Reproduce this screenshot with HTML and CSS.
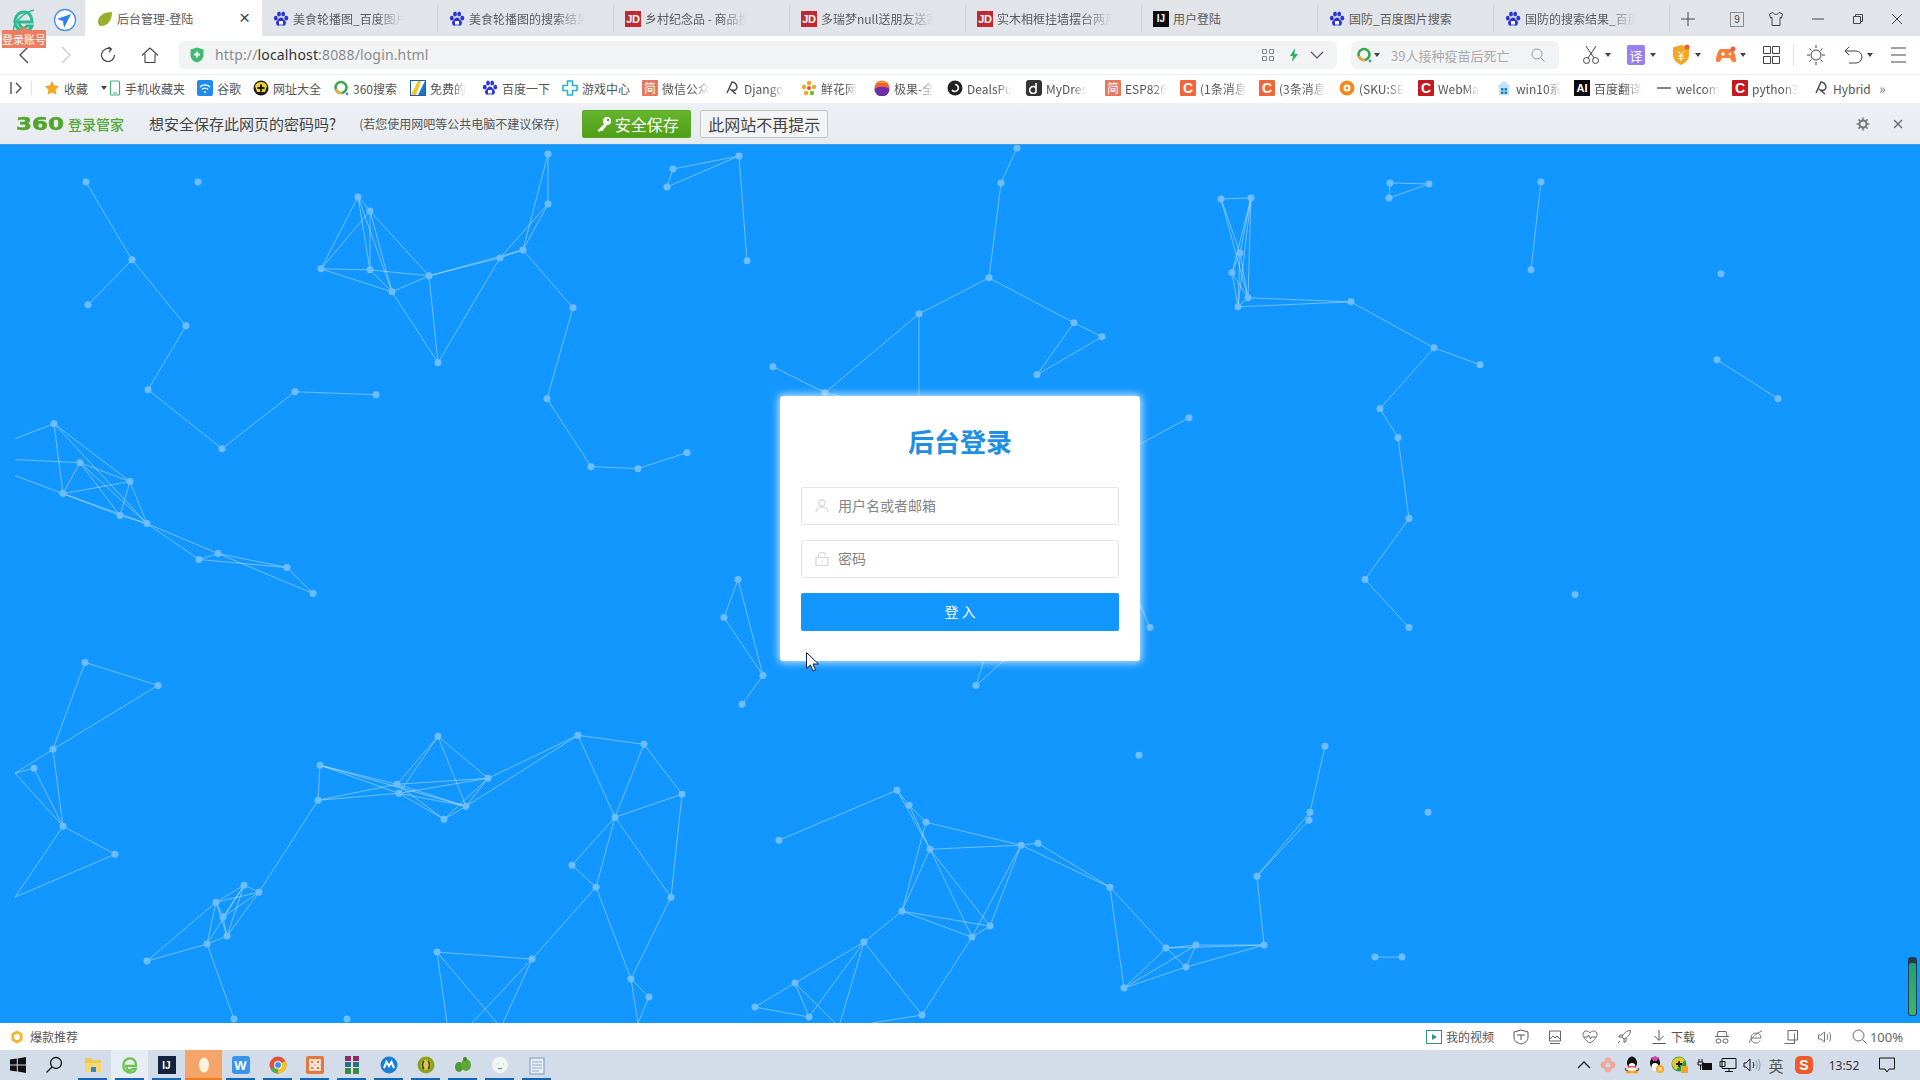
FILE: index.html
```html
<!DOCTYPE html>
<html lang="zh">
<head>
<meta charset="utf-8">
<title>后台管理-登陆</title>
<link rel="stylesheet" href="styles.css">
</head>
<body>
<svg class="defs" width="0" height="0">
  <symbol id="paw" viewBox="0 0 16 16"><g fill="#2b35d8"><ellipse cx="2.8" cy="7.2" rx="1.9" ry="2.4"/><ellipse cx="6" cy="3" rx="1.9" ry="2.5"/><ellipse cx="10.2" cy="3" rx="1.9" ry="2.5"/><ellipse cx="13.3" cy="7.2" rx="1.9" ry="2.4"/><path d="M8 6.5c-2 0-2.5 2-4 3.2-1.500 1.300-1.200 5 1.500 5 1 0 1.500-.4 2.500-.4s1.500.4 2.500.4c2.700 0 3-3.700 1.500-5-1.500-1.200-2-3.200-4-3.200z"/></g><rect x="6" y="10" width="4" height="3.500" fill="#fff"/></symbol>
  <symbol id="leaf" viewBox="0 0 16 16"><path d="M15 1C8 1 1 4 1 11c0 2 1 4 3 4 7 0 11-6 11-14z" fill="#9aae2e"/></symbol>
  <symbol id="q360" viewBox="0 0 16 16"><circle cx="8" cy="7.500" r="5.500" fill="none" stroke="#38a84a" stroke-width="2.600"/><path d="M3 9a5.500 5.500 0 0 0 6 4" fill="none" stroke="#f2a33a" stroke-width="2.600"/><circle cx="14" cy="14" r="1.400" fill="#4a90d9"/></symbol>
  <symbol id="dj" viewBox="0 0 16 16"><path d="M3 13 8 2c2 0 5 2 5 5s-3 4-5 3M6 9l6 5" fill="none" stroke="#444" stroke-width="1.400"/></symbol>
</svg>

<header class="tabbar">
  <div class="brand">
    <svg class="ie" width="24" height="26" viewBox="0 0 24 26"><path d="M5 14h15c0-6-3-10-8-10S3 8 3 14c0 5 4 9 9 9 4 0 7-2 8-5h-5c-1 1-2 2-3 2-3 0-5-3-5-6" fill="none" stroke="#2dbb8e" stroke-width="3"/><path d="M2 22C0 18 8 6 22 2" fill="none" stroke="#2dbb8e" stroke-width="1.500"/></svg>
    <svg class="navi" width="24" height="24" viewBox="0 0 24 24"><circle cx="12" cy="12" r="10.500" fill="#fff" stroke="#4a90e2" stroke-width="1.300"/><path d="M18 6 11 20l-1-7-6-2z" fill="#2f80ed"/></svg>
    <span class="badge">登录账号</span>
  </div>
  <div class="tab tab-active"><svg class="fav" width="16" height="16"><use href="#leaf"/></svg><span class="tab-title">后台管理-登陆</span><span class="tab-x">×</span></div>
  <div class="tab"><svg class="fav" width="16" height="16"><use href="#paw"/></svg><span class="tab-title fade">美食轮播图_百度图片</span></div>
  <div class="tab"><svg class="fav" width="16" height="16"><use href="#paw"/></svg><span class="tab-title fade">美食轮播图的搜索结果</span></div>
  <div class="tab"><span class="fav box jd">JD</span><span class="tab-title fade">乡村纪念品 - 商品搜</span></div>
  <div class="tab"><span class="fav box jd">JD</span><span class="tab-title fade">多瑞梦null送朋友送家</span></div>
  <div class="tab"><span class="fav box jd">JD</span><span class="tab-title fade">实木相框挂墙摆台两用</span></div>
  <div class="tab"><span class="fav box ij">IJ</span><span class="tab-title">用户登陆</span></div>
  <div class="tab"><svg class="fav" width="16" height="16"><use href="#paw"/></svg><span class="tab-title">国防_百度图片搜索</span></div>
  <div class="tab"><svg class="fav" width="16" height="16"><use href="#paw"/></svg><span class="tab-title fade">国防的搜索结果_百度</span></div>
  <div class="winctl">
    <svg class="wc" width="16" height="16" viewBox="0 0 16 16"><path d="M8 1v14M1 8h14" stroke="#444" fill="none"/></svg>
    <span class="wc wc-count"><span class="count">9</span></span>
    <svg class="wc wc-shirt" width="16" height="16" viewBox="0 0 16 16"><path d="M5 1.500 1.500 3l1 4 1.500-.5v8h8v-8l1.500.5 1-4L11 1.500C10 4 6 4 5 1.500z" stroke="#444" fill="none"/></svg>
    <svg class="wc wc-m" width="14" height="14" viewBox="0 0 14 14"><path d="M1 7h12" stroke="#444" fill="none"/></svg>
    <svg class="wc wc-r" width="12" height="12" viewBox="0 0 12 12"><path d="M1.500 3.500h7v7h-7zM3.500 3.500v-2h7v7h-2" stroke="#444" fill="none"/></svg>
    <svg class="wc wc-c" width="12" height="12" viewBox="0 0 12 12"><path d="M1 1l10 10M11 1 1 11" stroke="#444" fill="none"/></svg>
  </div>
</header>

<div class="addrbar">
  <span class="nav"><svg width="14" height="18" viewBox="0 0 14 18"><path d="M11 1 3 9l8 8" stroke="#444" fill="none" stroke-width="1.200"/></svg></span>
  <span class="nav"><svg width="14" height="18" viewBox="0 0 14 18"><path d="m3 1 8 8-8 8" stroke="#c8c8c8" fill="none" stroke-width="1.200"/></svg></span>
  <span class="nav"><svg width="18" height="18" viewBox="0 0 18 18"><path d="M15.500 9A6.500 6.500 0 1 1 12 3.200M9.500 1l3 2.200-2.500 2.800" stroke="#444" fill="none" stroke-width="1.200"/></svg></span>
  <span class="nav"><svg width="18" height="18" viewBox="0 0 18 18"><path d="M1 9.500 9 2l8 7.500M4 8v8.500h10V8" stroke="#444" fill="none" stroke-width="1.100"/></svg></span>
  <div class="url">
    <svg width="14" height="16" viewBox="0 0 14 16"><path d="M7 .5 13.500 2.500V8c0 4-3 6.500-6.500 7.500C3.500 14.500.5 12 .5 8V2.500z" fill="#3fbb74"/><path d="M7 4.500v6M4 7.500h6" stroke="#fff" stroke-width="1.800"/></svg>
    <span class="url-text">http://<b>localhost</b>:8088/login.html</span>
    <svg class="qr" width="12" height="12" viewBox="0 0 12 12"><path d="M.5.500h4v4h-4zM7.500.500h4v4h-4zM.5 7.500h4v4h-4zM7.500 7.500h4v4h-4z" stroke="#888" fill="none"/></svg>
    <svg class="bolt" width="10" height="14" viewBox="0 0 10 14"><path d="M6 0 1 8h3l-1 6 6-8H5.500z" fill="#26b36a"/></svg>
    <svg class="chev" width="14" height="8" viewBox="0 0 14 8"><path d="m1 1 6 6 6-6" stroke="#555" fill="none" stroke-width="1.200"/></svg>
  </div>
  <div class="search">
    <svg width="16" height="16"><use href="#q360"/></svg><i class="caret"></i>
    <span class="search-text">39人接种疫苗后死亡</span>
    <svg class="mag" width="14" height="14" viewBox="0 0 14 14"><circle cx="6" cy="6" r="5" stroke="#999" fill="none"/><path d="m10 10 3.500 3.500" stroke="#999"/></svg>
  </div>
  <div class="tools">
    <span class="tool"><svg width="20" height="20" viewBox="0 0 20 20"><path d="M5 1l8 12M15 1 7 13" stroke="#444" fill="none"/><circle cx="5.500" cy="15.500" r="3" stroke="#444" fill="none"/><circle cx="14.500" cy="15.500" r="3" stroke="#444" fill="none"/></svg><i class="caret"></i></span>
    <span class="tool"><span class="yi">译</span><i class="caret"></i></span>
    <span class="tool"><svg width="20" height="22" viewBox="0 0 20 22"><path d="M10 1l8 2.500V11c0 5-4 8-8 10-4-2-8-5-8-10V3.500z" fill="#f5a623"/><path d="m7 7 3 4 3-4M10 11v6M7 12h6M7 14.500h6" stroke="#fff" fill="none"/><circle cx="16" cy="3" r="2.500" fill="#ef5b4a"/></svg><i class="caret"></i></span>
    <span class="tool"><svg width="22" height="18" viewBox="0 0 22 18"><path d="M6 3h10c3 0 5 8 5 11s-3 3-5 0l-1-2H7l-1 2c-2 3-5 3-5 0S3 3 6 3z" fill="#f5823a"/><path d="M6 8h4M8 6v4" stroke="#fff" stroke-width="1.500"/><circle cx="15" cy="8" r="1.300" fill="#fff"/><circle cx="18" cy="3" r="2.500" fill="#ef5b4a"/></svg><i class="caret"></i></span>
    <svg class="tool-i" width="24" height="20" viewBox="0 0 24 20"><path d="M4.500 1.500h7v7h-7zM13.500 1.500h7v7h-7zM4.500 11.500h7v7h-7zM13.500 11.500h7v7h-7z" stroke="#444" fill="none"/></svg>
    <i class="tool-sep"></i>
    <svg class="tool-i" width="24" height="22" viewBox="0 0 24 22"><circle cx="12" cy="11" r="5" stroke="#444" fill="none"/><path d="M12 1v3M12 18v3M3 11h3M18 11h3M5.500 4.500l2 2M16.500 15.500l2 2M18.500 4.500l-2 2M7.500 15.500l-2 2" stroke="#444"/></svg>
    <span class="tool"><svg width="24" height="20" viewBox="0 0 24 20"><path d="M4 6h11a6 6 0 0 1 0 12H8M8 2 4 6l4 4" stroke="#444" fill="none"/></svg><i class="caret"></i></span>
    <svg class="tool-i" width="24" height="18" viewBox="0 0 24 18"><path d="M5 2h15M5 9h15M5 16h15" stroke="#444"/></svg>
  </div>
</div>

<nav class="bookmarks">
  <div class="bm bm-toggle"><svg width="16" height="16" viewBox="0 0 16 16"><path d="M3 2v12M8 3l5 5-5 5" stroke="#444" fill="none" stroke-width="1.300"/></svg><i class="bm-sep"></i></div>
  <div class="bm"><svg class="bi" width="16" height="16" viewBox="0 0 16 16"><path d="m8 1 2.200 4.600 5 .7-3.600 3.500.9 5L8 12.400l-4.500 2.400.9-5L.8 6.300l5-.7z" fill="#f5a623"/></svg><span class="bt">收藏</span><i class="caret bm-caret"></i></div>
  <div class="bm"><svg class="bi" width="12" height="16" viewBox="0 0 12 16"><rect x="1.500" y="1" width="9" height="14" rx="1" fill="#fff" stroke="#49b07b" stroke-width="1.200"/><path d="M4 13h4" stroke="#49b07b"/></svg><span class="bt bt-near">手机收藏夹</span></div>
  <div class="bm"><span class="bi box wifi"><svg width="12" height="12" viewBox="0 0 12 12"><path d="M1 5a7 7 0 0 1 10 0M3 7.500a4 4 0 0 1 6 0" stroke="#fff" fill="none" stroke-width="1.200"/><circle cx="6" cy="10" r="1" fill="#fff"/></svg></span><span class="bt">谷歌</span></div>
  <div class="bm"><svg class="bi" width="16" height="16" viewBox="0 0 16 16"><circle cx="8" cy="8" r="7.500" fill="#1c1c1c"/><path d="M2 6a6.500 6.500 0 0 1 12 0l-2 6H4z" fill="#f0d22e"/><path d="M8 4.500v7M4.500 8h7" stroke="#1c1c1c" stroke-width="2"/></svg><span class="bt">网址大全</span></div>
  <div class="bm"><svg class="bi" width="16" height="16"><use href="#q360"/></svg><span class="bt">360搜索</span></div>
  <div class="bm"><svg class="bi" width="16" height="16" viewBox="0 0 16 16"><rect x=".5" y=".5" width="15" height="15" fill="#fff" stroke="#1a5fa8"/><path d="M1 15 8 1h3L6 15z" fill="#f2c41c"/><path d="M15 1v14H8z" fill="#1a76c8"/></svg><span class="bt fade">免费的</span></div>
  <div class="bm"><svg class="bi" width="16" height="16"><use href="#paw"/></svg><span class="bt">百度一下</span></div>
  <div class="bm"><svg class="bi" width="16" height="16" viewBox="0 0 16 16"><path d="M5.500 1h5v4.500H15v5h-4.500V15h-5v-4.500H1v-5h4.500z" fill="none" stroke="#28b3c8" stroke-width="1.600"/></svg><span class="bt">游戏中心</span></div>
  <div class="bm"><span class="bi box jian">简</span><span class="bt fade">微信公众</span></div>
  <div class="bm"><svg class="bi" width="16" height="16"><use href="#dj"/></svg><span class="bt fade">Django</span></div>
  <div class="bm"><svg class="bi" width="16" height="16" viewBox="0 0 16 16"><g fill="#f5a623"><circle cx="8" cy="3" r="2.200"/><circle cx="3" cy="7" r="2.200"/><circle cx="13" cy="7" r="2.200"/><circle cx="5" cy="13" r="2.200"/></g><circle cx="11" cy="13" r="2.200" fill="#7cb82f"/><circle cx="8" cy="8" r="2" fill="#e3522f"/></svg><span class="bt fade">鲜花网</span></div>
  <div class="bm"><svg class="bi" width="16" height="16" viewBox="0 0 16 16"><circle cx="8" cy="8" r="7.500" fill="#f0613a"/><path d="M.5 9C4 6 11 6 15.500 9A7.500 7.500 0 0 1 .5 9z" fill="#6b2fa8"/><path d="M3 3c3-2.500 7-2.500 10 0z" fill="#f5a623"/></svg><span class="bt fade">极果-全</span></div>
  <div class="bm"><svg class="bi" width="16" height="16" viewBox="0 0 16 16"><circle cx="8" cy="8" r="7.500" fill="#222"/><path d="M8 4.500a3.500 3.500 0 1 1-3 5.500" stroke="#fff" fill="none" stroke-width="1.600"/></svg><span class="bt fade">DealsPu</span></div>
  <div class="bm"><span class="bi box mydres"><svg width="10" height="12" viewBox="0 0 10 12"><path d="M7 1v10M7 6a3.500 3.500 0 1 0 0 4" stroke="#fff" fill="none" stroke-width="1.600"/></svg></span><span class="bt fade">MyDres</span></div>
  <div class="bm"><span class="bi box jian">简</span><span class="bt fade">ESP826</span></div>
  <div class="bm"><span class="bi box csdn">C</span><span class="bt fade">(1条消息</span></div>
  <div class="bm"><span class="bi box csdn">C</span><span class="bt fade">(3条消息</span></div>
  <div class="bm"><svg class="bi" width="16" height="16" viewBox="0 0 16 16"><circle cx="8" cy="8" r="7.500" fill="#ef8a1f"/><circle cx="8" cy="8" r="3.500" fill="#fff"/><circle cx="8" cy="8" r="1.500" fill="#ef8a1f"/></svg><span class="bt fade">(SKU:SE</span></div>
  <div class="bm"><span class="bi box cred">C</span><span class="bt fade">WebMa</span></div>
  <div class="bm"><svg class="bi" width="16" height="16" viewBox="0 0 16 16"><path d="M8 1 1 7h2v8h10V7h2z" fill="#bfe3f5"/><path d="M5 8h2.500v2.500H5zM8.500 8H11v2.500H8.500zM5 11.500h2.500V14H5zM8.500 11.500H11V14H8.500z" fill="#1a7fc8"/></svg><span class="bt fade">win10系</span></div>
  <div class="bm"><span class="bi box ai">AI</span><span class="bt fade">百度翻译</span></div>
  <div class="bm"><svg class="bi" width="16" height="16" viewBox="0 0 16 16"><path d="M1 8h14" stroke="#666" stroke-width="1.600"/></svg><span class="bt fade">welcom</span></div>
  <div class="bm"><span class="bi box cred">C</span><span class="bt fade">python3</span></div>
  <div class="bm"><svg class="bi" width="16" height="16"><use href="#dj"/></svg><span class="bt">Hybrid</span></div>
  <div class="bm bm-more">»</div>
</nav>

<div class="pwbar">
  <span class="logo-num"><span class="logo-360">360</span></span><span class="logo-txt">登录管家</span>
  <span class="pw-q">想安全保存此网页的密码吗?</span>
  <span class="pw-sub">(若您使用网吧等公共电脑不建议保存)</span>
  <button class="btn-save"><svg width="18" height="18" viewBox="0 0 18 18"><circle cx="12" cy="6" r="4" fill="#fff"/><path d="M9.500 8.500 2.500 15.500l2 1.500 1.500-1.500L7.500 16 12 10" fill="#fff"/><circle cx="13" cy="5" r="1.200" fill="#5aa821"/></svg>安全保存</button>
  <button class="btn-never">此网站不再提示</button>
  <svg class="pw-gear" width="14" height="14" viewBox="0 0 14 14"><circle cx="7" cy="7" r="3.500" stroke="#777" stroke-width="2" fill="none"/><path d="M7 .5v2.500M7 11v2.500M.5 7H3M11 7h2.500M2.400 2.400l1.700 1.700M9.900 9.900l1.700 1.700M11.600 2.400 9.900 4.100M4.100 9.900l-1.700 1.700" stroke="#777" stroke-width="1.500"/></svg>
  <svg class="pw-x" width="10" height="10" viewBox="0 0 10 10"><path d="m1 1 8 8M9 1 1 9" stroke="#666" stroke-width="1.300"/></svg>
</div>

<main class="stage">
  <svg class="net" viewBox="0 144 1920 879" preserveAspectRatio="none">
    <path class="edges" d="M86 181 132 259M132 259 88 304M132 259 186 325M186 325 148 389M148 389 222 448M222 448 295 391M295 391 376 394
      M358 196 321 268M358 196 370 269M358 196 392 291M358 196 370 210M370 210 321 268M370 210 370 269M370 210 392 291M370 210 429 275M321 268 370 269M370 269 429 275M321 268 392 291M370 269 392 291M392 291 429 275M392 291 438 362M429 275 438 362M429 275 500 257M429 275 523 249M500 257 438 362M500 257 523 249M500 257 548 203M523 249 548 203M523 249 548 153M548 203 548 153M523 249 573 307M573 307 547 398M547 398 591 466M591 466 638 468M638 468 687 452
      M673 168 667 186M673 168 739 155M667 186 739 155M739 155 747 260
      M54 423 15 438M15 459 80 462M15 475 63 493M54 423 63 493M54 423 130 481M54 423 147 523M80 462 63 493M80 462 130 481M80 462 120 515M80 462 147 523M130 481 63 493M130 481 120 515M130 481 147 523M63 493 120 515M63 493 147 523M120 515 147 523M147 523 199 559M147 523 218 553M199 559 218 553M199 559 287 567M218 553 287 567M218 553 313 593M287 567 313 593
      M738 579 724 617M738 579 763 675M724 617 763 675M763 675 742 704
      M773 366 825 392M825 392 919 313M919 313 989 277M989 277 1001 182M1001 182 1017 147M989 277 1074 322M1074 322 1102 336M1102 336 1037 374M1074 322 1037 374M919 313 919 420M825 392 900 410M1189 417 1100 465
      M1221 198 1251 197M1221 198 1240 252M1221 198 1248 297M1251 197 1240 252M1251 197 1232 272M1251 197 1238 306M1251 197 1248 297M1240 252 1232 272M1240 252 1248 297M1240 252 1238 306M1232 272 1248 297M1232 272 1238 306M1248 297 1238 306M1248 297 1351 301M1238 306 1351 301M1351 301 1434 347M1434 347 1480 364M1434 347 1380 408M1380 408 1398 437M1398 437 1409 518M1409 518 1365 579M1365 579 1409 627M1150 627 1130 580
      M1390 182 1429 183M1390 182 1389 197M1389 197 1429 183M1541 181 1531 269M1717 359 1778 398
      M85 662 158 685M85 662 53 749M158 685 53 749M53 749 15 773M53 749 63 826M34 768 15 773M34 768 63 826M15 773 63 826M63 826 115 854M63 826 15 897M115 854 15 897
      M244 885 259 892M244 885 216 902M244 885 223 917M244 885 227 936M244 885 207 944M259 892 216 902M259 892 223 917M259 892 227 936M259 892 318 800M216 902 223 917M216 902 227 936M216 902 207 944M216 902 147 961M223 917 227 936M227 936 207 944M207 944 147 961M207 944 234 1019
      M320 765 318 800M320 765 397 784M320 765 399 793M320 765 466 806M318 800 397 784M318 800 399 793M397 784 438 736M399 793 438 736M438 736 488 778M438 736 466 806M397 784 488 778M399 793 488 778M397 784 466 806M399 793 466 806M397 784 444 819M399 793 444 819M444 819 466 806M444 819 488 778M466 806 488 778M488 778 578 735M466 806 578 735M578 735 644 744M578 735 615 817M644 744 615 817M644 744 682 794M682 794 615 817M682 794 671 897M615 817 572 865M615 817 596 887M615 817 671 897M572 865 596 887M596 887 532 959M596 887 631 979M671 897 631 979M532 959 437 952M631 979 649 997M631 979 638 1023M649 997 638 1023M437 952 447 1023M437 952 497 1023M532 959 472 1023M532 959 503 1023
      M976 685 984 660M976 685 1004 660
      M779 840 897 790M897 790 909 805M897 790 930 849M909 805 926 822M909 805 930 849M926 822 1021 845M926 822 902 911M930 849 1021 845M930 849 902 911M930 849 990 926M930 849 972 937M1021 845 1038 843M1021 845 990 926M1021 845 972 937M1021 845 1110 887M1038 843 1110 887M902 911 990 926M902 911 972 937M972 937 990 926M902 911 864 942M864 942 795 983M864 942 809 1017M864 942 840 1023M864 942 922 1015M972 937 922 1015M795 983 755 1007M795 983 809 1017M795 983 835 1023M755 1007 809 1017M922 1015 872 1023M1110 887 1124 988M1110 887 1166 948M1166 948 1196 945M1166 948 1186 967M1166 948 1264 945M1196 945 1264 945M1196 945 1186 967M1186 967 1264 945M1124 988 1166 948M1124 988 1196 945M1124 988 1186 967M1264 945 1257 876M1257 876 1309 820M1257 876 1310 812M1309 820 1310 812M1310 812 1325 746M1375 957 1402 957"/>
    <path class="nodes" d="M86 181h0M198 181h0M132 259h0M88 304h0M186 325h0M148 389h0M222 448h0M295 391h0M376 394h0M358 196h0M370 210h0M321 268h0M370 269h0M392 291h0M429 275h0M438 362h0M500 257h0M523 249h0M548 203h0M548 153h0M573 307h0M547 398h0M591 466h0M638 468h0M687 452h0M673 168h0M667 186h0M739 155h0M747 260h0M54 423h0M80 462h0M130 481h0M63 493h0M120 515h0M147 523h0M199 559h0M218 553h0M287 567h0M313 593h0M738 579h0M724 617h0M763 675h0M742 704h0M773 366h0M825 392h0M919 313h0M989 277h0M1001 182h0M1017 147h0M1074 322h0M1102 336h0M1037 374h0M1189 417h0M1221 198h0M1251 197h0M1240 252h0M1232 272h0M1248 297h0M1238 306h0M1351 301h0M1434 347h0M1480 364h0M1380 408h0M1398 437h0M1409 518h0M1365 579h0M1409 627h0M1150 627h0M1390 182h0M1429 183h0M1389 197h0M1541 181h0M1531 269h0M1721 273h0M1717 359h0M1778 398h0M1575 594h0M85 662h0M158 685h0M53 749h0M34 768h0M63 826h0M115 854h0M244 885h0M259 892h0M216 902h0M223 917h0M227 936h0M207 944h0M147 961h0M234 1019h0M347 1019h0M320 765h0M318 800h0M397 784h0M399 793h0M438 736h0M488 778h0M466 806h0M444 819h0M578 735h0M644 744h0M682 794h0M615 817h0M572 865h0M596 887h0M671 897h0M532 959h0M437 952h0M631 979h0M649 997h0M976 685h0M897 790h0M779 840h0M909 805h0M926 822h0M930 849h0M1021 845h0M1038 843h0M902 911h0M990 926h0M972 937h0M864 942h0M795 983h0M755 1007h0M809 1017h0M922 1015h0M1110 887h0M1124 988h0M1166 948h0M1196 945h0M1186 967h0M1264 945h0M1257 876h0M1309 820h0M1310 812h0M1325 746h0M1375 957h0M1402 957h0M1139 755h0M1428 812h0"/>
  </svg>
  <section class="card">
    <h1 class="card-title">后台登录</h1>
    <form class="form">
      <label class="field">
        <svg class="field-i" width="14" height="14" viewBox="0 0 14 14"><circle cx="7" cy="4" r="3.200" stroke="#d5d5d5" fill="none" stroke-width="1.200"/><path d="M1 13.500c0-3.500 2.500-5.500 6-5.500s6 2 6 5.500" stroke="#d5d5d5" fill="none" stroke-width="1.200"/></svg>
        <input class="input" type="text" placeholder="用户名或者邮箱">
      </label>
      <label class="field">
        <svg class="field-i" width="14" height="14" viewBox="0 0 14 14"><rect x="1" y="5.500" width="12" height="8" stroke="#d5d5d5" fill="none" stroke-width="1.200"/><path d="M3.500 5.500V3.500a3.500 3 0 0 1 7 0" stroke="#d5d5d5" fill="none" stroke-width="1.200"/><path d="M7 8.500v2" stroke="#d5d5d5" stroke-width="1.400"/></svg>
        <input class="input" type="text" placeholder="密码">
      </label>
      <button class="submit" type="button">登 入</button>
    </form>
    <svg class="pointer" width="13" height="20" viewBox="0 0 13 20"><path d="M.5.500v16l4-3.500 2.500 6 2.500-1-2.500-6h5.500z" fill="#fff" stroke="#123" stroke-width="1"/></svg>
  </section>
  <div class="gauge"><i class="gauge-fill"></i></div>
</main>

<div class="statusbar">
  <svg class="st-hot" width="14" height="14" viewBox="0 0 14 14"><path d="M7 .5 12.500 3.500v7L7 13.500 1.500 10.500v-7z" fill="#f5b433"/><circle cx="7" cy="7" r="3" fill="#fff"/></svg>
  <span class="st-left">爆款推荐</span>
  <div class="st-right">
    <span class="st-item"><svg width="16" height="14" viewBox="0 0 16 14"><rect x=".5" y=".5" width="15" height="13" stroke="#2f9a6f" fill="none"/><path d="m6 4 5 3-5 3z" fill="#2f9a6f"/></svg>我的视频</span>
    <svg width="16" height="16" viewBox="0 0 16 16"><path d="M8 1 15 3v5c0 4-3 6-7 7-4-1-7-3-7-7V3z" stroke="#555" fill="none"/><path d="M4 6h8M8 6v5" stroke="#555"/></svg>
    <svg width="16" height="16" viewBox="0 0 16 16"><path d="M2.500 2h11v10h-11zM3 14.500h10M3 10l3-3 2 2 2-2 3 3" stroke="#666" fill="none"/></svg>
    <svg width="16" height="16" viewBox="0 0 16 16"><path d="M8 14C3 11 1 8 1 5.500 1 3 3 2 4.500 2 6 2 7.500 3 8 4c.5-1 2-2 3.500-2C13 2 15 3 15 5.500 15 8 13 11 8 14zM2 8h3.500l1-2 2 4 1-2H14" stroke="#666" fill="none"/></svg>
    <svg width="16" height="16" viewBox="0 0 16 16"><path d="M14.500 1.500c-4 0-7 3-8.500 6.500l2 2c3.500-1.500 6.500-4.500 6.500-8.500zM6 8H2.500l1.500-2h3M8 10v3.500l2-1.500V9M4 12l-2 2" stroke="#666" fill="none"/></svg>
    <span class="st-item"><svg width="16" height="16" viewBox="0 0 16 16"><path d="M8 1v10M3.500 7 8 11.500 12.500 7M1.500 14.500h13" stroke="#555" fill="none"/></svg>下载</span>
    <svg width="16" height="16" viewBox="0 0 16 16"><path d="M4 2.500h8l1 5H3zM1 7.500h14" stroke="#666" fill="none"/><rect x="2" y="10" width="5" height="4" rx="2" stroke="#666" fill="none"/><rect x="9" y="10" width="5" height="4" rx="2" stroke="#666" fill="none"/></svg>
    <svg width="16" height="16" viewBox="0 0 16 16"><path d="M3 9h10c0-3-2-5-5-5S3 6 3 9c0 3 2 5 5 5 2 0 3.500-1 4-2.500M1.500 14C1 12 6 5 14 2" stroke="#777" fill="none"/></svg>
    <svg width="16" height="16" viewBox="0 0 16 16"><path d="M1.500 14.500h10v-10M5 11V1.500h9.500V11z" stroke="#666" fill="none"/></svg>
    <svg width="16" height="16" viewBox="0 0 16 16"><path d="M1.500 6v4H4l3.500 3V3L4 6zM10 5c1 2 1 4 0 6M12.500 3.500c1.500 3 1.500 6 0 9" stroke="#777" fill="none"/></svg>
    <span class="st-item st-zoom"><svg width="15" height="15" viewBox="0 0 15 15"><circle cx="6.500" cy="6.500" r="5.500" stroke="#666" fill="none"/><path d="m10.500 10.500 4 4" stroke="#666"/></svg>100%</span>
  </div>
</div>

<footer class="taskbar">
  <span class="tb-sys"><svg width="16" height="16" viewBox="0 0 16 16"><path d="M0 2.500 6.800 1.500v6H0zM7.800 1.400 16 0v7.500H7.800zM0 8.500h6.800v6L0 13.500zM7.800 8.500H16V16l-8.200-1.400z" fill="#111"/></svg></span>
  <span class="tb-sys"><svg width="18" height="18" viewBox="0 0 18 18"><circle cx="11" cy="7" r="5.500" stroke="#111" fill="none" stroke-width="1.300"/><path d="M7 11 1.500 16.500" stroke="#111" stroke-width="1.300"/></svg></span>
  <span class="tb on"><svg width="18" height="18" viewBox="0 0 18 18"><path d="M1 2h6l1 2h9v4H1z" fill="#f1c950"/><path d="M1 7h16v9H1z" fill="#f5d776"/><path d="M7 16v-5h5v5z" fill="#2f86d1"/></svg></span>
  <span class="tb on tb-light"><svg width="18" height="20" viewBox="0 0 24 26"><path d="M5 14h15c0-6-3-10-8-10S3 8 3 14c0 5 4 9 9 9 4 0 7-2 8-5h-5c-1 1-2 2-3 2-3 0-5-3-5-6" fill="none" stroke="#6cc24a" stroke-width="3"/></svg></span>
  <span class="tb on"><span class="tbox tij">IJ</span></span>
  <span class="tb on tb-orange"><svg width="12" height="16" viewBox="0 0 12 16"><ellipse cx="6" cy="8" rx="5" ry="7.500" fill="#fff3e0"/></svg></span>
  <span class="tb on"><span class="tbox tw">W</span></span>
  <span class="tb on"><svg width="18" height="18" viewBox="0 0 18 18"><circle cx="9" cy="9" r="8.500" fill="#e2533d"/><path d="M9 9 1.500 13A8.500 8.500 0 0 0 9 17.500z" fill="#4caf50"/><path d="M9 9v8.500A8.500 8.500 0 0 0 16.500 5z" fill="#f5c518"/><circle cx="9" cy="9" r="4" fill="#fff"/><circle cx="9" cy="9" r="3" fill="#4a8fe7"/></svg></span>
  <span class="tb on"><span class="tbox txampp"><svg width="14" height="14" viewBox="0 0 14 14"><path d="M2 2h4v4H2zM8 2h4v4H8zM2 8h4v4H2zM8 8h4v4H8z" stroke="#fff" fill="none" stroke-width="1.500"/></svg></span></span>
  <span class="tb on"><svg width="18" height="20" viewBox="0 0 18 20"><rect x="2" y="1" width="14" height="5" fill="#8e2a6a"/><rect x="2" y="7" width="14" height="5" fill="#2a6e8e"/><rect x="2" y="13" width="14" height="6" fill="#3a8a4a"/><path d="M8 1h2v18H8z" fill="#e8e0c0"/></svg></span>
  <span class="tb on"><svg width="18" height="18" viewBox="0 0 18 18"><circle cx="9" cy="9" r="8.500" fill="#1a7fd4"/><path d="M4 12 6.500 6 9 10l2.500-4L14 12" stroke="#fff" fill="none" stroke-width="2"/></svg></span>
  <span class="tb on"><svg width="18" height="18" viewBox="0 0 18 18"><circle cx="9" cy="9" r="8.500" fill="#8ca31f"/><circle cx="9" cy="9" r="5" fill="#e2c93a"/><path d="M7 5C5 7 5 11 7 13M11 5c2 2 2 6 0 8" stroke="#333" fill="none" stroke-width="1.500"/></svg></span>
  <span class="tb on"><svg width="18" height="18" viewBox="0 0 18 18"><ellipse cx="5" cy="11" rx="4" ry="5" fill="#4f9a2e"/><ellipse cx="12" cy="9" rx="5" ry="6" fill="#5ca836"/><circle cx="11" cy="3" r="2" fill="#3d8526"/></svg></span>
  <span class="tb on"><svg width="18" height="18" viewBox="0 0 18 18"><circle cx="9" cy="9" r="8" fill="#f2f6f2"/><path d="M6 8h.5M12 8h.5M7 12c1 .8 3 .8 4 0" stroke="#888" fill="none" stroke-width="1.200"/></svg></span>
  <span class="tb on"><svg width="16" height="19" viewBox="0 0 16 19"><rect x="1" y="2" width="14" height="16" fill="#e3eefa" stroke="#7d9ab8"/><path d="M3 6h10M3 9h10M3 12h10M3 15h7" stroke="#9ab" /></svg></span>
  <div class="tray">
    <svg width="14" height="8" viewBox="0 0 14 8"><path d="m1 7 6-6 6 6" stroke="#222" fill="none" stroke-width="1.300"/></svg>
    <svg width="16" height="16" viewBox="0 0 16 16"><g fill="#f2a69a"><circle cx="8" cy="4" r="3.500"/><circle cx="4" cy="8" r="3.500"/><circle cx="12" cy="8" r="3.500"/><circle cx="8" cy="12" r="3.500"/></g><circle cx="8" cy="8" r="2.500" fill="#c9d8ea"/></svg>
    <svg width="16" height="18" viewBox="0 0 16 18"><ellipse cx="8" cy="7" rx="5" ry="6.500" fill="#111"/><ellipse cx="8" cy="11" rx="3.500" ry="4" fill="#fff"/><path d="M2 12c-1.500 2 0 3 2 2.500M14 12c1.500 2 0 3-2 2.500" stroke="#111" fill="none"/><path d="M4 9.500c2 1 6 1 8 0v2H4z" fill="#e33"/><ellipse cx="5" cy="16" rx="3" ry="1.500" fill="#f5a623"/><ellipse cx="11" cy="16" rx="3" ry="1.500" fill="#f5a623"/></svg>
    <svg width="16" height="18" viewBox="0 0 16 18"><ellipse cx="7" cy="7" rx="5" ry="6.500" fill="#111"/><ellipse cx="7" cy="11" rx="3.500" ry="4" fill="#fff"/><path d="M3 1h8l-2 4H5z" fill="#d63fa6"/><circle cx="12" cy="13" r="4" fill="#f5a623"/><path d="M10 12h4M10 14h4" stroke="#fff"/></svg>
    <svg width="18" height="18" viewBox="0 0 18 18"><circle cx="8" cy="8" r="7.500" fill="#2c9c4c"/><path d="M1 7A7.500 7.500 0 0 1 14 4L5 14C3 13 1 10 1 7z" fill="#e8c827"/><path d="M8 5v6M5 8h6" stroke="#222" stroke-width="1.800"/><rect x="10" y="10" width="7" height="7" fill="#f5a623"/></svg>
    <svg width="18" height="14" viewBox="0 0 18 14"><path d="M4 1v3M7 1v3M3 4h5v3H3zM5.500 7v5" stroke="#111" fill="none"/><rect x="7" y="5" width="10" height="7" fill="#111"/></svg>
    <svg width="18" height="16" viewBox="0 0 18 16"><path d="M3 1.500h14v10H3zM1 4.500h5v5H1zM10 11.500v3M6 14.500h8" stroke="#111" fill="#d3dde9"/></svg>
    <svg width="18" height="14" viewBox="0 0 18 14"><path d="M1 5v4h2l4 4V1L3 5zM10 4c1 2 1 4 0 6" stroke="#111" fill="none"/><path d="M13 2.500c1.500 3 1.500 6 0 9M15.500 1c2 4 2 8 0 12" stroke="#8a97a8" fill="none"/></svg>
    <span class="ime">英</span>
    <span class="sogou">S</span>
    <span class="clock">13:52</span>
    <svg width="16" height="16" viewBox="0 0 16 16"><path d="M.5 1h15v11h-5.500L8 15l-2-3H.5z" stroke="#111" fill="none"/></svg>
  </div>
</footer>
</body>
</html>
```

FILE: styles.css
```css
* { box-sizing: border-box; }
html, body { margin: 0; height: 100%; }
body {
  width: 1920px; height: 1080px; overflow: hidden;
  display: flex; flex-direction: column;
  font-family: "Noto Sans CJK SC", "Noto Sans", sans-serif;
  font-size: 12px; color: #555; background: #fff;
}
.defs { position: absolute; }
svg { display: block; flex: none; }
.caret { display: block; flex: none; width: 0; height: 0; border: 3px solid transparent; border-top: 4px solid #444; border-bottom: 0; }
.fade { -webkit-mask-image: linear-gradient(to right, #000 72%, transparent 96%); mask-image: linear-gradient(to right, #000 72%, transparent 96%); }

/* favicon boxes */
.box { display: flex; align-items: center; justify-content: center; width: 16px; height: 16px; flex: none; font: 700 11px/16px "Liberation Sans", sans-serif; color: #fff; }
.jd { background: #c2292e; letter-spacing: -.4px; }
.ij { background: #0c0c0c; font-size: 10px; }
.wifi { background: #1f8ceb; border-radius: 2px; }
.jian { background: #e9775f; font: 400 12px/16px "Noto Sans CJK SC", sans-serif; border-radius: 1px; }
.mydres { background: #333; border-radius: 3px; }
.csdn { background: #f0673b; font-size: 14px; border-radius: 1px; }
.cred { background: #c41a1f; font-size: 14px; border-radius: 1px; }
.ai { background: #0a0a0a; font-size: 11px; }

/* tab strip */
.tabbar { flex: 0 0 36px; display: flex; background: #e1e5ea; position: relative; }
.brand { flex: 0 0 85px; display: flex; align-items: flex-start; padding: 8px 0 0 12px; gap: 17px; position: relative; }
.badge { position: absolute; z-index: 5; left: 2px; top: 30px; width: 44px; height: 18px; background: #ee7c5e; color: #fff; font-size: 11px; line-height: 18px; text-align: center; white-space: nowrap; }
.badge::before { content: ""; position: absolute; left: 18px; top: -4px; border: 4px solid transparent; border-top: 0; border-bottom-color: #ee7c5e; }
.tab { flex: 0 0 176px; display: flex; align-items: center; gap: 4px; padding: 1px 0 0 11px; position: relative; }
.tab::after { content: ""; position: absolute; right: 0; top: 4px; height: 28px; width: 1px; background: #d2d6db; }
.tab-active { flex-basis: 177px; background: #fff; padding-left: 12px; }
.tab-active::after { display: none; }
.tab-title { max-width: 126px; white-space: nowrap; color: #5a5a5a; }
.tab-x { position: absolute; left: 154px; top: 6px; font: 400 19px/24px "Liberation Sans", sans-serif; color: #444; }
.winctl { flex: 1; display: flex; align-items: center; padding: 2px 0 0 0; }
.wc { margin-left: 22px; }
.winctl > svg:first-child { margin-left: 10px; }
.wc-count { margin-left: 34px; display: block; }
.wc-shirt { margin-left: 24px; }
.wc-m { margin-left: 27px; }
.wc-r { margin-left: 27px; }
.wc-c { margin-left: 27px; }
.count { display: block; width: 14px; height: 15px; border: 1px solid #8a8a8a; font: 400 10px/13px "Liberation Sans", sans-serif; text-align: center; color: #444; }

/* address row */
.addrbar { flex: 0 0 38px; display: flex; align-items: center; padding-left: 3px; background: #fff; }
.nav { flex: 0 0 42px; display: flex; justify-content: center; }
.url { flex: 0 0 1158px; margin-left: 8px; height: 28px; background: #f1f3f5; border-radius: 6px; display: flex; align-items: center; padding: 0 13px 0 11px; gap: 6px; }
.url-text { flex: 1; padding-left: 5px; font: 400 14px/28px "Noto Sans", sans-serif; letter-spacing: .15px; color: #8b8b8b; }
.url-text b { font-weight: 400; color: #333; }
.qr { margin-right: 9px; }
.bolt { margin-right: 5px; }
.search { flex: 0 0 208px; margin-left: 14px; height: 28px; background: #f1f3f5; border-radius: 6px; display: flex; align-items: center; padding: 0 14px 0 5px; gap: 2px; }
.search-text { flex: 1; margin-left: 9px; font-size: 13px; color: #aaa; white-space: nowrap; }
.tools { display: flex; align-items: center; gap: 13px; margin-left: 20px; }
.tool { display: flex; align-items: center; gap: 2px; width: 32px; }
.tool > svg { width: 24px; }
.tool-sep { display: block; width: 1px; height: 22px; margin: 0 -3px; background: #e2e2e2; }
.yi { display: flex; width: 18px; height: 20px; margin: 0 3px; background: #9a7ff0; color: #fff; font-size: 13px; align-items: center; justify-content: center; border-radius: 2px; }

/* bookmarks: one column per saved link */
.bookmarks {
  flex: 0 0 29px; padding: 0 0 2px 8px; background: #fff; border-top: 1px solid #eef0f2;
  display: grid; align-items: center;
  grid-template-columns: 36px 65px 88px 56px 80px 77px 72px 80px 80px 82px 77px 73px 73px 79px 79px 75px 79px 80px 79px 78px 78px 82px 76px 81px 66px 20px;
}
.bm { display: flex; align-items: center; gap: 4px; color: #555; white-space: nowrap; }
.bm-toggle { gap: 7px; }
.bm-sep { display: block; width: 1px; height: 14px; background: #ddd; }
.bt { flex: none; }
.bt.fade { -webkit-mask-image: linear-gradient(to right, #000 65%, transparent 100%); mask-image: linear-gradient(to right, #000 65%, transparent 100%); }
.bi { flex: none; }
.bm-caret { margin: 0 0 0 9px; }
.bm-more { color: #777; font-size: 14px; }

/* save-password prompt */
.pwbar { flex: 0 0 41px; display: flex; align-items: center; background: linear-gradient(#edf0f4, #e7ebf0); padding-left: 16px; color: #333; }
.logo-num { display: block; width: 52px; }
.logo-360 { display: inline-block; font: 700 18px/20px "DejaVu Sans", sans-serif; color: #52a52e; transform: scaleX(1.280); transform-origin: left center; -webkit-text-stroke: .5px #52a52e; }
.logo-txt { width: 81px; font-size: 14px; font-weight: 500; color: #54a536; white-space: nowrap; }
.pw-q { font-size: 15px; color: #444; white-space: nowrap; }
.pw-sub { margin-left: 23px; font-size: 12px; color: #555; white-space: nowrap; }
.btn-save, .btn-never { height: 28px; font: 400 16px/26px "Noto Sans CJK SC", sans-serif; border-radius: 2px; padding: 0; }
.btn-save { margin-left: 23px; width: 109px; display: flex; align-items: center; justify-content: center; gap: 2px; color: #fff; background: linear-gradient(#66b52c, #4f9f1a); border: 1px solid #57a521; }
.btn-never { margin-left: 9px; width: 128px; color: #444; background: #f3f4f6; border: 1px solid #c4c6c9; }
.pw-gear { margin-left: auto; }
.pw-x { margin: 0 17px 0 23px; }

/* canvas stage */
.stage { flex: 0 0 879px; position: relative; background: #1296ff; border-top: 1px solid #3d9fe8; }
.net { position: absolute; inset: 0; width: 100%; height: 100%; }
.edges { fill: none; stroke: rgba(255,255,255,.4); stroke-width: 1; }
.nodes { fill: none; stroke: #6dbdff; stroke-width: 7; stroke-linecap: round; }
.card { position: relative; width: 360px; height: 265px; margin: 251px auto 0; padding: 28px 21px; background: #fff; border-radius: 3px; box-shadow: 0 0 9px 1px rgba(255,255,255,.85); }
.card-title { margin: 0 0 29px; font-size: 26px; font-weight: 700; line-height: 34px; text-align: center; color: #1f8fe5; }
.form { display: flex; flex-direction: column; gap: 15px; }
.field { position: relative; display: block; }
.field-i { position: absolute; left: 14px; top: 12px; }
.input { display: block; width: 100%; height: 38px; padding: 0 10px 2px 36px; font: 400 14px "Noto Sans CJK SC", sans-serif; border: 1px solid #e6e6e6; border-radius: 2px; outline: 0; }
.input::placeholder { color: #858585; }
.submit { display: block; width: 100%; height: 38px; padding: 0 0 2px; background: #1296ff; color: #fff; border: 0; border-radius: 2px; font: 400 14px "Noto Sans CJK SC", sans-serif; }
.pointer { position: absolute; left: 26px; top: 256px; }
.gauge { position: absolute; right: 3px; bottom: 7px; width: 9px; height: 59px; border: 1px solid #1d3b4f; border-radius: 3px; background: #243b45; padding-top: 5px; }
.gauge-fill { display: block; height: 100%; background: linear-gradient(#1f9e7a, #3fb56a); border-radius: 2px; }

/* status bar */
.statusbar { flex: 0 0 27px; display: flex; align-items: center; padding: 0 17px 0 10px; background: #fff; color: #555; }
.st-left { margin-left: 6px; font-size: 12px; }
.st-right { margin-left: auto; display: flex; align-items: center; gap: 18.600px; }
.st-item { display: flex; align-items: center; gap: 4px; white-space: nowrap; }
.st-zoom { gap: 3px; font: 400 13px "Noto Sans", sans-serif; color: #666; }

/* windows taskbar */
.taskbar { flex: 0 0 30px; display: flex; background: #d3dde9; align-items: stretch; }
.tb-sys { flex: 0 0 36px; display: flex; align-items: center; justify-content: center; }
.tb { flex: 0 0 37px; display: flex; align-items: center; justify-content: center; position: relative; }
.tb-sys + .tb { margin-left: 2px; }
.on::after { content: ""; position: absolute; left: 4px; right: 4px; bottom: 0; height: 2px; background: #1567b5; }
.tb-light { background: #e6edf5; }
.tb-orange { background: #f5a56a; }
.tb-orange::after { left: 0; right: 0; background: #f07c1e; }
.tbox { display: flex; align-items: center; justify-content: center; width: 18px; height: 18px; font: 700 10px "Liberation Sans", sans-serif; color: #fff; }
.tij { background: #14233c; }
.tw { background: #3b94ec; border-radius: 3px; font-size: 13px; }
.txampp { background: #e2793a; border-radius: 2px; }
.tray {
  margin-left: auto; padding-right: 14px;
  display: grid; align-items: center; justify-items: center;
  grid-template-columns: repeat(9, 24px) 32px 48px 38px;
}
.ime { font-size: 15px; color: #555; }
.sogou { width: 18px; height: 18px; background: #ef5a2a; border-radius: 5px; color: #fff; font: 700 14px/18px "Liberation Sans", sans-serif; text-align: center; }
.clock { font: 400 12px "Noto Sans", sans-serif; color: #333; }
```
